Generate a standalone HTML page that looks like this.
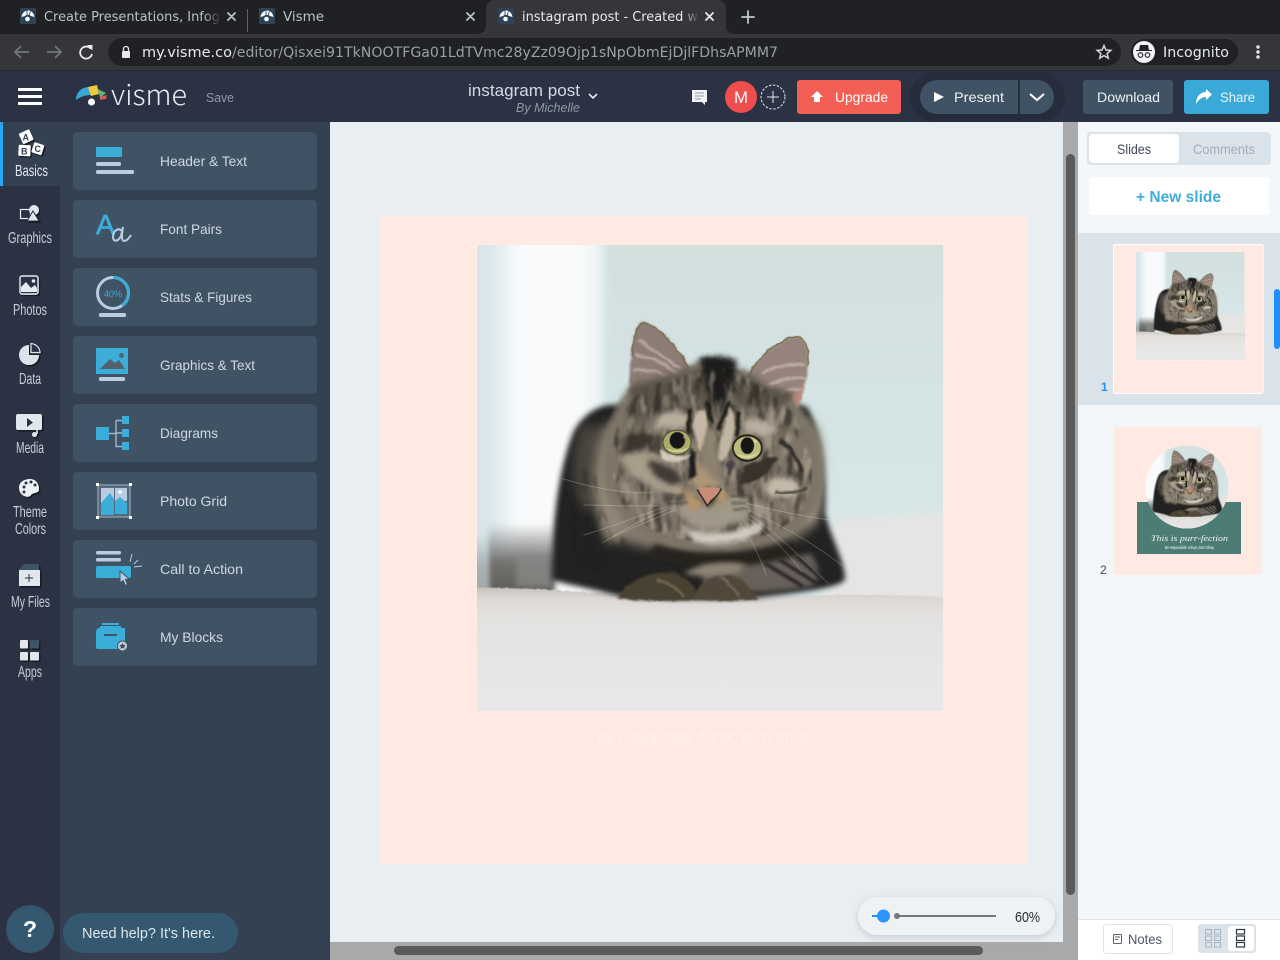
<!DOCTYPE html>
<html><head><meta charset="utf-8"><title>instagram post - Created with Visme</title>
<style>html,body{margin:0;padding:0;background:#2b3244;overflow:hidden}svg{display:block}text{font-family:"Liberation Sans",sans-serif}.d{font-family:"DejaVu Sans",sans-serif}</style></head>
<body>
<svg xmlns="http://www.w3.org/2000/svg" width="1280" height="960" viewBox="0 0 1280 960">
<defs>
<filter id="b1" x="-20%" y="-20%" width="140%" height="140%"><feGaussianBlur stdDeviation="1"/></filter>
<filter id="b3" x="-20%" y="-20%" width="140%" height="140%"><feGaussianBlur stdDeviation="3"/></filter>
<filter id="b8" x="-20%" y="-20%" width="140%" height="140%"><feGaussianBlur stdDeviation="8"/></filter>
<filter id="b16" x="-30%" y="-30%" width="160%" height="160%"><feGaussianBlur stdDeviation="16"/></filter>
<filter id="ds" x="-20%" y="-20%" width="150%" height="150%"><feDropShadow dx="1.500" dy="1.500" stdDeviation="0" flood-color="#161a24"/></filter>
<filter id="sh" x="-10%" y="-30%" width="120%" height="170%"><feDropShadow dx="0" dy="2" stdDeviation="4" flood-color="#7b8794" flood-opacity=".35"/></filter>
<filter id="fur" filterUnits="userSpaceOnUse" x="21" y="15" width="1398" height="1398" color-interpolation-filters="sRGB"><feTurbulence type="fractalNoise" baseFrequency=".035" numOctaves="2" seed="2" result="n"/><feDisplacementMap in="SourceGraphic" in2="n" scale="10" xChannelSelector="R" yChannelSelector="G"/></filter>
<filter id="grit" filterUnits="userSpaceOnUse" x="0" y="900" width="1450" height="520" color-interpolation-filters="sRGB"><feTurbulence type="fractalNoise" baseFrequency=".06 .09" numOctaves="2" seed="5" result="n"/><feDisplacementMap in="SourceGraphic" in2="n" scale="8" xChannelSelector="R" yChannelSelector="G"/><feGaussianBlur stdDeviation="1.500"/></filter>
<filter id="st1" x="0" y="0" width="1" height="1" color-interpolation-filters="sRGB"><feTurbulence type="fractalNoise" baseFrequency=".04 .012" numOctaves="3" seed="4"/><feColorMatrix values="0 0 0 0 .13 0 0 0 0 .12 0 0 0 0 .10 5 0 0 0 -2.300"/><feComposite in2="SourceAlpha" operator="in"/><feGaussianBlur stdDeviation="3"/></filter>
<filter id="st2" x="0" y="0" width="1" height="1" color-interpolation-filters="sRGB"><feTurbulence type="fractalNoise" baseFrequency=".045 .014" numOctaves="3" seed="11"/><feColorMatrix values="0 0 0 0 .78 0 0 0 0 .73 0 0 0 0 .65 5 0 0 0 -2.500"/><feComposite in2="SourceAlpha" operator="in"/><feGaussianBlur stdDeviation="3"/></filter>
<linearGradient id="cur" x1="0" x2="1" y1="0" y2="0"><stop offset="0" stop-color="#d2e3e8"/><stop offset=".2" stop-color="#dbe8ec"/><stop offset=".33" stop-color="#f1f5f7"/><stop offset=".75" stop-color="#f7f9fa"/><stop offset=".93" stop-color="#eff4f5"/><stop offset="1" stop-color="#d8e6e6"/></linearGradient>
<linearGradient id="wall" x1="0" x2="0" y1="0" y2="1"><stop offset="0" stop-color="#d2e0de"/><stop offset=".5" stop-color="#d5e6e6"/><stop offset="1" stop-color="#dbe9ea"/></linearGradient>
<linearGradient id="car" x1="0" x2="0" y1="0" y2="1"><stop offset="0" stop-color="#c6c1bb"/><stop offset=".09" stop-color="#dcd9d5"/><stop offset=".25" stop-color="#e5e3e1"/><stop offset="1" stop-color="#e9e8e9"/></linearGradient>
<linearGradient id="dk" x1="0" x2="0" y1="0" y2="1"><stop offset="0" stop-color="#5f5d5a" stop-opacity="0"/><stop offset=".55" stop-color="#5f5d5a" stop-opacity=".85"/><stop offset="1" stop-color="#5f5d5a"/></linearGradient>
<linearGradient id="fadeD" x1="0" x2="1" y1="0" y2="0"><stop offset="0" stop-color="#202124" stop-opacity="0"/><stop offset="1" stop-color="#202124"/></linearGradient>
<linearGradient id="fadeA" x1="0" x2="1" y1="0" y2="0"><stop offset="0" stop-color="#35363a" stop-opacity="0"/><stop offset="1" stop-color="#35363a"/></linearGradient>
<clipPath id="circ"><circle cx="1187" cy="487" r="41.500"/></clipPath>
<symbol id="fav" viewBox="0 0 16 16"><rect width="16" height="16" rx="1.500" fill="#2f4358"/><path d="M1.500 9C2 5 5 2.500 8 2.500S14 5 14.500 9L11 8C10 6.500 6 6.500 5 8Z" fill="#fff"/><path d="M7 2.500v5M10.500 3.500L9 7.500" stroke="#2f4358" stroke-width=".9"/><circle cx="7.500" cy="11" r="2.300" fill="#fff"/></symbol>
<symbol id="cat" viewBox="21 15 1398 1398">
<rect x="21" y="15" width="1398" height="1398" fill="url(#wall)"/>
<rect x="-20" y="-20" width="430" height="1090" fill="url(#cur)" filter="url(#b8)"/>
<rect x="135" y="-20" width="215" height="920" fill="#f8fafb" filter="url(#b16)"/>
<rect x="55" y="850" width="200" height="210" fill="url(#dk)" filter="url(#b8)"/>
<rect x="-10" y="880" width="65" height="180" fill="url(#dk)" opacity=".45" filter="url(#b8)"/>
<rect x="140" y="950" width="105" height="90" fill="#8a8b89" opacity=".7" filter="url(#b8)"/>
<path d="M1090 838L1450 820V1100H1060Z" fill="#e7e5e3" filter="url(#b16)"/>
<path d="M0 1042C300 1045 450 1070 700 1075C900 1075 1100 1055 1450 1072V1420H0Z" fill="url(#car)" filter="url(#grit)"/>

<!-- soft out-of-focus body -->
<path d="M245 1020C245 870 262 690 312 575C350 505 410 482 470 500L800 450L1010 500C1050 560 1070 720 1065 820C1085 900 1125 960 1125 1020C1100 1045 1000 1055 870 1072C700 1080 570 1078 440 1066C360 1045 300 1035 245 1020Z" fill="#232120" filter="url(#b8)"/>
<ellipse cx="355" cy="680" rx="45" ry="130" fill="#4a443e" filter="url(#b16)"/>
<path d="M395 560C365 650 370 800 420 880C530 960 860 960 1005 880C1060 800 1070 650 1040 560L800 420Z" fill="#857c6e" filter="url(#b16)"/>
<ellipse cx="430" cy="760" rx="50" ry="150" fill="#8f8676" filter="url(#b16)"/>
<ellipse cx="1020" cy="720" rx="35" ry="140" fill="#a39a8a" filter="url(#b16)"/>
<path d="M560 910C650 950 830 955 965 905L1000 955C850 995 650 980 530 945Z" fill="#26241f" filter="url(#b8)"/>
<path d="M700 975C770 990 900 970 1020 940C1055 980 1050 1030 1020 1040C900 1060 800 1060 700 1050Z" fill="#67615a" filter="url(#b8)"/>
<path d="M640 1000C700 965 780 960 830 975L800 1000L700 1010Z" fill="#8f8474" filter="url(#b8)"/>
<path d="M885 970L1000 1040M930 960L1040 1030M980 950L1060 1020" stroke="#2f2c29" stroke-width="12" fill="none" filter="url(#b3)"/>

<g filter="url(#fur)">
<path d="M440 1075C480 1012 560 988 620 1000C660 1020 680 1040 680 1080C600 1084 510 1084 440 1075Z" fill="#4a4233" filter="url(#b3)"/>
<path d="M670 1078C680 1028 740 998 790 1008C830 1028 850 1050 865 1078C800 1084 730 1084 670 1078Z" fill="#51473a" filter="url(#b3)"/>
<path d="M560 1020C600 1030 630 1050 640 1070M750 1010C780 1030 800 1050 805 1070" stroke="#8a7c64" stroke-width="5" fill="none" filter="url(#b3)"/>
<!-- ears -->
<path d="M478 450C478 360 485 270 515 245C570 255 640 330 665 405C640 460 520 480 478 450Z" fill="#8d7b74" filter="url(#b3)"/>
<path d="M488 350C490 290 500 255 520 248C570 260 635 330 660 400" fill="none" stroke="#7b6c53" stroke-width="5"/>
<path d="M505 300C540 325 590 355 635 390M495 345C550 352 600 380 635 410M490 392C540 385 590 400 620 430" stroke="#d9ccc3" stroke-width="6" fill="none" filter="url(#b3)" opacity=".8"/>
<path d="M825 420C860 350 930 295 985 290C1015 300 1020 350 1010 400C1000 460 990 490 980 515C930 490 860 470 825 420Z" fill="#96847c" filter="url(#b3)"/>
<path d="M830 418C860 350 930 295 985 290C1012 300 1018 340 1014 380" fill="none" stroke="#7d6f55" stroke-width="5"/>
<path d="M875 400C910 380 960 370 1005 375M895 435C930 420 970 410 1005 415M925 465C950 450 975 445 1000 450" stroke="#ddd1c8" stroke-width="6" fill="none" filter="url(#b3)" opacity=".8"/>
<path d="M985 510L1005 430L965 470Z" fill="#c78f7e" filter="url(#b3)" opacity=".7"/>
<!-- head -->
<path d="M478 440C530 410 620 410 680 365C750 350 820 390 870 425C930 480 990 490 1000 515C1050 580 1065 680 1050 770C1020 880 880 930 730 925C590 930 460 880 410 760C385 640 410 530 478 440Z" fill="#7e7567" filter="url(#b8)"/>
<ellipse cx="560" cy="455" rx="85" ry="28" fill="#5b5448" filter="url(#b8)"/>
<ellipse cx="900" cy="470" rx="70" ry="25" fill="#5e574b" filter="url(#b8)"/>
<path d="M500 440C590 410 690 380 760 380C830 390 900 445 960 510L820 500L700 490L560 520L470 570Z" fill="#5a5349" filter="url(#b16)"/>
<path d="M690 355C720 345 770 345 800 365C790 430 770 480 745 530C720 480 700 420 690 355Z" fill="#1b1a1a" filter="url(#b8)"/>
</g>
<!-- fur mottling, inset so the soft edge survives -->
<path d="M430 620C440 530 480 460 560 430C640 410 700 385 760 385C830 400 900 450 970 520C1020 590 1035 680 1020 760C990 860 870 910 730 905C600 905 480 860 440 760C425 710 425 660 430 620Z" filter="url(#st1)" opacity=".6"/>
<path d="M430 620C440 530 480 460 560 430C640 410 700 385 760 385C830 400 900 450 970 520C1020 590 1035 680 1020 760C990 860 870 910 730 905C600 905 480 860 440 760C425 710 425 660 430 620Z" filter="url(#st2)" opacity=".45"/>
<path d="M380 650C370 740 400 860 470 900L380 1000L300 960L310 720Z" filter="url(#st1)" opacity=".35"/>
<g filter="url(#fur)">
<!-- face patches -->
<path d="M560 530C600 510 640 510 665 530L650 570C610 560 580 560 550 570Z" fill="#b9ae9e" filter="url(#b8)"/>
<path d="M820 540C860 530 900 540 925 575L875 590L820 570Z" fill="#baafa0" filter="url(#b8)"/>
<path d="M670 560C670 520 690 500 705 510C720 540 710 600 690 640Z" fill="#c6b8a5" filter="url(#b3)"/>
<path d="M780 500C800 530 800 590 770 650C750 680 735 660 745 620Z" fill="#c3b5a3" filter="url(#b3)"/>
<path d="M660 510L655 575M712 490L725 545M775 490L745 565M805 520L803 585" stroke="#1e1b19" stroke-width="12" stroke-linecap="round" filter="url(#b3)"/>
<path d="M715 560C700 620 690 680 680 730L755 735C750 680 740 620 730 570Z" fill="#8d8270" filter="url(#b8)"/>
<path d="M680 650C700 700 740 720 755 735L680 745C650 720 660 680 680 650Z" fill="#ad9578" filter="url(#b8)"/>
<path d="M470 590C510 570 540 580 570 590C540 620 500 640 450 650Z" fill="#3a342e" filter="url(#b8)"/>
<path d="M450 650C520 620 570 640 610 680C640 720 640 740 640 770C560 760 480 720 450 650Z" fill="#a99d8b" filter="url(#b8)"/>
<path d="M530 660C580 665 630 685 640 730C600 745 550 720 530 660Z" fill="#3f3a34" filter="url(#b8)"/>
<path d="M820 680C860 660 900 650 925 650C900 700 850 740 810 730Z" fill="#37322c" filter="url(#b3)"/>
<path d="M900 720C950 700 1000 720 990 760C950 780 900 770 880 750Z" fill="#c4baa9" filter="url(#b8)"/>
<path d="M930 600C960 620 985 660 995 695" stroke="#2f2b27" stroke-width="12" fill="none" filter="url(#b3)"/>
<path d="M915 755C950 765 985 755 1010 745" stroke="#3e3932" stroke-width="8" fill="none" filter="url(#b3)"/>
<path d="M660 620L655 720L680 705L675 640Z" fill="#1f1c1a" filter="url(#b3)"/>
<path d="M770 670C780 650 800 660 795 680L775 710Z" fill="#473f47" filter="url(#b3)"/>
<path d="M570 625C600 650 640 655 665 640C650 665 610 675 575 655Z" fill="#d5cbba" filter="url(#b3)"/>
<!-- muzzle -->
<path d="M640 780C600 800 630 850 710 870C800 860 870 830 830 775C790 760 740 790 710 800Z" fill="#a09888" filter="url(#b8)"/>
<path d="M640 860C690 885 740 885 800 870C840 860 870 850 880 835C890 880 820 915 730 912C680 912 650 895 640 860Z" fill="#d2cdc4" filter="url(#b8)"/>
<path d="M640 740C660 760 680 770 700 800L660 810C650 790 640 770 640 740ZM760 745C790 770 760 790 730 800Z" fill="#b79569" filter="url(#b8)"/>
<path d="M590 765H640M590 775H635M600 790H650M785 768H835M785 790H830M790 808H830" stroke="#23201d" stroke-width="5" stroke-dasharray="6 3" filter="url(#b3)" opacity=".9"/>
</g>
<!-- eyes -->
<g filter="url(#b1)">
<ellipse cx="621" cy="607" rx="44" ry="38" fill="#4a4234"/>
<ellipse cx="621" cy="607" rx="41" ry="35" fill="#a9ab66"/>
<path d="M585 622C600 642 645 642 660 618C645 632 600 634 585 622Z" fill="#cfcf98"/>
<ellipse cx="622" cy="601" rx="23" ry="25" fill="#171614"/>
<ellipse cx="642" cy="592" rx="3" ry="2.500" fill="#a9ad9c"/>
<ellipse cx="832" cy="624" rx="46" ry="41" fill="#211d19"/>
<ellipse cx="832" cy="624" rx="41" ry="35" fill="#bcbc7c"/>
<path d="M795 640C815 660 855 658 872 632C855 650 815 652 795 640Z" fill="#dcdca8"/>
<ellipse cx="832" cy="617" rx="20" ry="25" fill="#141312"/>
<ellipse cx="856" cy="604" rx="5" ry="3.500" fill="#d6d9cc"/>
<!-- nose -->
<path d="M682 745C700 741 735 741 750 745C746 762 735 772 722 780L712 798L702 780C690 770 686 758 682 745Z" fill="#c98c78"/>
<path d="M682 748C690 765 700 775 712 798C722 780 745 770 754 745" fill="none" stroke="#26211e" stroke-width="4"/>
</g>
<!-- whiskers -->
<g fill="none" stroke="#e5dfd5" stroke-width="1.500" opacity=".6" filter="url(#b1)">
<path d="M600 798C520 820 430 860 340 885M605 803C530 830 460 870 395 910M612 810C550 840 490 860 420 895"/>
<path d="M560 797C480 800 410 795 340 795M540 758C460 760 370 745 275 715"/>
<path d="M835 810C920 850 1020 900 1120 980M840 825C910 870 990 950 1075 1030M835 835C890 880 950 930 995 995M810 850C840 890 870 950 890 1010M830 790C930 815 1050 840 1200 855"/>
</g>
</symbol>
</defs>

<rect width="1280" height="960" fill="#2b3244"/>

<!-- tab strip -->
<rect width="1280" height="34" fill="#202124"/>
<rect y="34" width="1280" height="37" fill="#35363a"/>
<rect y="70" width="1280" height="1" fill="#2a2b2f"/>
<path d="M476 34C483 34 486 31 486 26V10C486 4 489 0 495 0H717C723 0 726 4 726 10V26C726 31 729 34 736 34Z" fill="#35363a"/>
<rect x="247" y="9" width="1" height="23" fill="#5f6368"/>
<use href="#fav" x="20" y="8" width="16" height="16"/>
<use href="#fav" x="259" y="8" width="16" height="16"/>
<use href="#fav" x="498" y="8" width="16" height="16"/>
<text class="d" x="44" y="21" font-size="13" fill="#bdc1c6" textLength="176" lengthAdjust="spacingAndGlyphs">Create Presentations, Infog</text>
<rect x="204" y="6" width="17" height="22" fill="url(#fadeD)"/>
<text class="d" x="283" y="21" font-size="13" fill="#bdc1c6" textLength="41" lengthAdjust="spacingAndGlyphs">Visme</text>
<text class="d" x="522" y="21" font-size="13" fill="#e8eaed" textLength="176" lengthAdjust="spacingAndGlyphs">instagram post - Created w</text>
<rect x="682" y="6" width="17" height="22" fill="url(#fadeA)"/>
<g stroke-width="1.800" stroke-linecap="round">
<path d="M228 13l7 7M235 13l-7 7M467 13l7 7M474 13l-7 7" stroke="#bdc1c6"/>
<path d="M706 13l7 7M713 13l-7 7" stroke="#e8eaed"/>
<path d="M748 11v12M742 17h12" stroke="#c4c7cc"/>
</g>

<!-- toolbar -->
<g fill="none" stroke-width="1.800">
<path d="M29 52H15M21 46l-6 6 6 6" stroke="#73767b"/>
<path d="M47 52H61M55 46l6 6-6 6" stroke="#73767b"/>
<path d="M91 49A6 6 0 1 0 92 54" stroke="#e8eaed"/>
</g>
<path d="M87 45l5.500 0 0 5.500Z" fill="#e8eaed"/>
<rect x="108" y="38" width="1013" height="28" rx="14" fill="#202124"/>
<rect x="122" y="51" width="8" height="7" rx="1" fill="#e8eaed"/>
<path d="M123.500 51v-2a2.500 2.500 0 0 1 5 0v2" fill="none" stroke="#e8eaed" stroke-width="1.300"/>
<text class="d" x="142" y="57" font-size="14" fill="#e8eaed" textLength="90" lengthAdjust="spacingAndGlyphs">my.visme.co</text>
<text class="d" x="232" y="57" font-size="14" fill="#9aa0a6" textLength="546" lengthAdjust="spacingAndGlyphs">/editor/Qisxei91TkNOOTFGa01LdTVmc28yZz09Ojp1sNpObmEjDjlFDhsAPMM7</text>
<path d="M1104 45.500l2 4.500 4.800.4-3.700 3.100 1.200 4.700-4.300-2.600-4.300 2.600 1.200-4.700-3.700-3.100 4.800-.4Z" fill="none" stroke="#d5d7da" stroke-width="1.500"/>
<rect x="1131" y="39" width="107" height="26" rx="13" fill="#202124"/>
<circle cx="1144" cy="52" r="11" fill="#f1f3f4"/>
<path d="M1136 50h16v1h-16ZM1139 50l1-5h8l1 5Z" fill="#202124"/>
<circle cx="1140.500" cy="55" r="2.300" fill="none" stroke="#202124" stroke-width="1.100"/><circle cx="1147.500" cy="55" r="2.300" fill="none" stroke="#202124" stroke-width="1.100"/>
<text class="d" x="1163" y="57" font-size="14.500" fill="#e8eaed" textLength="66" lengthAdjust="spacingAndGlyphs">Incognito</text>
<g fill="#e8eaed"><circle cx="1258" cy="47" r="1.700"/><circle cx="1258" cy="52" r="1.700"/><circle cx="1258" cy="57" r="1.700"/></g>

<!-- header -->
<rect y="71" width="1280" height="51" fill="#2b3244"/>
<rect x="18" y="88" width="24" height="3" fill="#fff"/><rect x="18" y="95" width="24" height="3" fill="#fff"/><rect x="18" y="102" width="24" height="3" fill="#fff"/>
<path d="M76 100C76 93 81 87 89 87L91 95C85 95 80 97 76 100Z" fill="#3aa9d8"/>
<path d="M88 87L97 85L99 94L91 96Z" fill="#f1c93b"/>
<path d="M98 89L106 93L100 98Z" fill="#5fb37c"/>
<path d="M100 97L107 95L106 99L100 100Z" fill="#e0584d"/>
<circle cx="91.500" cy="102" r="3.500" fill="#fff"/>
<text x="111" y="105" font-size="28" fill="#e8ebef" textLength="76" lengthAdjust="spacingAndGlyphs" style="font-family:'Noto Sans CJK JP','Liberation Sans',sans-serif;font-weight:300">visme</text>
<text x="206" y="102" font-size="13" fill="#8f99a6" textLength="28" lengthAdjust="spacingAndGlyphs">Save</text>
<text x="468" y="96" font-size="17" fill="#d5dae0" textLength="112" lengthAdjust="spacingAndGlyphs">instagram post</text>
<text x="516" y="112" font-size="13" font-style="italic" fill="#8f99a6" textLength="64" lengthAdjust="spacingAndGlyphs">By Michelle</text>
<path d="M589 94l4 4 4-4" fill="none" stroke="#e6e9ed" stroke-width="1.600"/>
<path d="M692 90h15v12h-2v3l-3-3h-10Z" fill="#f1f3f5"/><path d="M695 93h9M695 96h9M695 99h6" stroke="#8e97a3" stroke-width="1"/>
<circle cx="741" cy="97" r="16" fill="#f04d4d"/>
<text x="734" y="103" font-size="17" fill="#fff" textLength="14" lengthAdjust="spacingAndGlyphs">M</text>
<circle cx="773" cy="97" r="12" fill="none" stroke="#e6e9ed" stroke-width="1" stroke-dasharray="2.500 1.500"/>
<path d="M773 91v12M767 97h12" stroke="#e6e9ed" stroke-width="1"/>
<rect x="797" y="80" width="104" height="34" rx="3" fill="#f45f55"/>
<path d="M817 91l6 6h-3v5h-6v-5h-3Z" fill="#fff"/>
<text x="835" y="102" font-size="14" fill="#fff" textLength="53" lengthAdjust="spacingAndGlyphs">Upgrade</text>
<path d="M935 72H1040A25 25 0 0 1 1040 122H935A25 25 0 0 1 935 72Z" fill="#262c3c"/>
<path d="M937 80H1018V114H937A17 17 0 0 1 937 80Z" fill="#405364"/>
<path d="M1020 80H1037A17 17 0 0 1 1037 114H1020Z" fill="#405364"/>
<path d="M934 92l10 5-10 5Z" fill="#fff"/>
<text x="954" y="102" font-size="14" fill="#eef1f4" textLength="50" lengthAdjust="spacingAndGlyphs">Present</text>
<path d="M1030 94l7 6 7-6" fill="none" stroke="#fff" stroke-width="2"/>
<rect x="1083" y="80" width="90" height="34" rx="3" fill="#405364"/>
<text x="1097" y="102" font-size="14" fill="#eef1f4" textLength="63" lengthAdjust="spacingAndGlyphs">Download</text>
<rect x="1184" y="80" width="85" height="34" rx="3" fill="#39a9d8"/>
<path d="M1196 104C1196 96 1201 92 1206 92V89L1212 94.500L1206 100V97C1202 97 1199 99 1196 104Z" fill="#fff"/>
<text x="1220" y="102" font-size="14" fill="#eef3f6" textLength="35" lengthAdjust="spacingAndGlyphs">Share</text>

<!-- rail and panel -->
<rect y="122" width="60" height="838" fill="#2b3244"/>
<rect x="60" y="122" width="270" height="838" fill="#334152"/>
<rect y="122" width="60" height="64" fill="#334152"/>
<rect y="122" width="3" height="64" fill="#2aa6f0"/>
<g font-size="16" fill="#c9cfd7">
<text x="15" y="176" textLength="33" lengthAdjust="spacingAndGlyphs" fill="#e3e7ec">Basics</text>
<text x="8" y="243" textLength="44" lengthAdjust="spacingAndGlyphs">Graphics</text>
<text x="13" y="315" textLength="34" lengthAdjust="spacingAndGlyphs">Photos</text>
<text x="19" y="384" textLength="22" lengthAdjust="spacingAndGlyphs">Data</text>
<text x="16" y="453" textLength="28" lengthAdjust="spacingAndGlyphs">Media</text>
<text x="13" y="517" textLength="34" lengthAdjust="spacingAndGlyphs">Theme</text>
<text x="15" y="534" textLength="31" lengthAdjust="spacingAndGlyphs">Colors</text>
<text x="11" y="607" textLength="39" lengthAdjust="spacingAndGlyphs">My Files</text>
<text x="18" y="677" textLength="24" lengthAdjust="spacingAndGlyphs">Apps</text>
</g>
<g>
<g filter="url(#ds)">
<rect x="20.500" y="131" width="11.500" height="11.500" rx="1" fill="#fff" transform="rotate(-25 26 137)"/>
<rect x="18.500" y="145" width="12" height="11" rx="1" fill="#fff" transform="rotate(3 24 150)"/>
<rect x="32.500" y="143.500" width="10.500" height="10.500" rx="1" fill="#fff" transform="rotate(18 38 149)"/>
</g>
<text x="22.500" y="140.500" font-size="9" font-weight="700" fill="#334152">A</text>
<text x="21" y="154.500" font-size="9" font-weight="700" fill="#334152">B</text>
<text x="34.500" y="152" font-size="9" font-weight="700" fill="#334152">C</text>
<g filter="url(#ds)">
<rect x="20.500" y="209.500" width="10" height="9" fill="#2b3244" stroke="#e6ebf1" stroke-width="1.200"/>
<circle cx="34" cy="210" r="5" fill="#e1e6ee"/>
<path d="M33 211l6 10H27Z" fill="#e1e6ee" stroke="#2b3244"/>
<rect x="20" y="276" width="18" height="18" rx="2" fill="#2b3244" stroke="#e6ebf1" stroke-width="1.400"/>
<circle cx="33.500" cy="281" r="1.800" fill="#e6ebf1"/>
<path d="M21 292V287L26 282L31 288L35 285L37 288V292Z" fill="#e6ebf1"/>
<path d="M29 345V355H39A10 10 0 1 1 29 345Z" fill="#dde3ea"/>
<path d="M31 343.500C36 344 40 348 40 352.500H31Z" fill="#2b3244" stroke="#dde3ea" stroke-width="1.200"/>
<rect x="16" y="414" width="26" height="16" rx="2" fill="#e2e7ee"/>
<path d="M37 423V434" stroke="#e2e7ee" stroke-width="1.500"/>
<circle cx="34.500" cy="434.500" r="2.500" fill="#e2e7ee"/>
<path d="M19 488C19 482 24 479 30 479C36 479 39 484 39 489C39 494 33 492 31 495C29 499 19 496 19 488Z" fill="#eef1f4"/>
<path d="M24 564L39 564V570H19Z" fill="#3e5566"/>
<path d="M19 570H40V586H19Z" fill="#e2e7ee"/>
<rect x="20" y="640" width="8" height="8.500" rx="1" fill="#e2e7ee"/>
<rect x="30" y="640" width="9" height="8.500" rx="1" fill="#3e5566"/>
<rect x="20" y="652" width="8" height="8.500" rx="1" fill="#e2e7ee"/>
<rect x="30" y="652" width="9" height="8.500" rx="1" fill="#e2e7ee"/>
</g>
<path d="M27 418l6 4.500-6 4.500Z" fill="#2b3244"/>
<g fill="#2b3244"><circle cx="24" cy="487" r="1.500"/><circle cx="26" cy="483" r="1.500"/><circle cx="31" cy="482" r="1.500"/><circle cx="35" cy="485" r="1.500"/><circle cx="24" cy="492" r="1.500"/></g>
<path d="M29 574v8M25 578h8" stroke="#2b3244" stroke-width="1"/>
</g>

<!-- cards -->
<g fill="#405364">
<rect x="73" y="132" width="244" height="58" rx="5"/><rect x="73" y="200" width="244" height="58" rx="5"/>
<rect x="73" y="268" width="244" height="58" rx="5"/><rect x="73" y="336" width="244" height="58" rx="5"/>
<rect x="73" y="404" width="244" height="58" rx="5"/><rect x="73" y="472" width="244" height="58" rx="5"/>
<rect x="73" y="540" width="244" height="58" rx="5"/><rect x="73" y="608" width="244" height="58" rx="5"/>
</g>
<g font-size="14" fill="#cfd8e0">
<text x="160" y="166" textLength="87" lengthAdjust="spacingAndGlyphs">Header &amp; Text</text>
<text x="160" y="234" textLength="62" lengthAdjust="spacingAndGlyphs">Font Pairs</text>
<text x="160" y="302" textLength="92" lengthAdjust="spacingAndGlyphs">Stats &amp; Figures</text>
<text x="160" y="370" textLength="95" lengthAdjust="spacingAndGlyphs">Graphics &amp; Text</text>
<text x="160" y="438" textLength="58" lengthAdjust="spacingAndGlyphs">Diagrams</text>
<text x="160" y="506" textLength="67" lengthAdjust="spacingAndGlyphs">Photo Grid</text>
<text x="160" y="574" textLength="83" lengthAdjust="spacingAndGlyphs">Call to Action</text>
<text x="160" y="642" textLength="63" lengthAdjust="spacingAndGlyphs">My Blocks</text>
</g>
<!-- card icons -->
<rect x="96" y="147" width="26" height="10" rx="1" fill="#3aadd9"/>
<rect x="96" y="162" width="25" height="4" rx="1.500" fill="#b9cce2"/><rect x="96" y="170" width="38" height="4" rx="1.500" fill="#b9cce2"/>
<text x="96" y="234" font-size="28" fill="#3aadd9" stroke="#3aadd9" stroke-width=".7">A</text>
<path d="M122 231C118 227 113 231 113 237C113 242 118 242 121 236L123 227C122 233 121 241 124 241C127 241 129 238 131 235" fill="none" stroke="#b9cce2" stroke-width="2"/>
<circle cx="113" cy="293" r="15.500" fill="none" stroke="#b9cce2" stroke-width="3"/>
<path d="M113 277.500A15.500 15.500 0 0 1 122 305.600" fill="none" stroke="#3aadd9" stroke-width="3"/>
<text x="113" y="297" font-size="9" fill="#3aadd9" text-anchor="middle" textLength="18" lengthAdjust="spacingAndGlyphs">40%</text>
<rect x="99" y="313" width="27" height="4" rx="1.500" fill="#b9cce2"/>
<rect x="96" y="348" width="32" height="26" fill="#3aadd9"/>
<path d="M100 369L110 359L115 363L119 360L125 369Z" fill="#55606c"/><circle cx="121.500" cy="355.500" r="2.500" fill="#55606c"/>
<rect x="99" y="377" width="26" height="4" rx="1.500" fill="#b9cce2"/>
<path d="M109 433.500H116M116 420.500H122M116 420.500V446.500H122M116 433H122" fill="none" stroke="#9fb5cd" stroke-width="1.400"/>
<rect x="96" y="427" width="13" height="13" fill="#3aadd9"/>
<rect x="122" y="416" width="7" height="8" fill="#3aadd9"/><rect x="122" y="429" width="7" height="8" fill="#3aadd9"/><rect x="122" y="442" width="7" height="8" fill="#3aadd9"/>
<rect x="98" y="485" width="32" height="32" fill="#56697a" stroke="#8597a8" stroke-width="1.500"/>
<rect x="101" y="488" width="13" height="27" fill="#b9cce2"/>
<path d="M101 515V503L110 493L114 499V515Z" fill="#3aadd9"/>
<rect x="115" y="488" width="12" height="13" fill="#b9cce2"/><circle cx="120" cy="492" r="1.800" fill="#fff"/>
<path d="M115 501L120 497L127 503V514H115Z" fill="#3aadd9"/>
<g fill="#fff"><rect x="96" y="483" width="3" height="3"/><rect x="129" y="483" width="3" height="3"/><rect x="96" y="516" width="3" height="3"/><rect x="129" y="516" width="3" height="3"/></g>
<rect x="96" y="551" width="25" height="3.500" rx="1.500" fill="#b9cce2"/><rect x="96" y="558" width="25" height="3.500" rx="1.500" fill="#b9cce2"/>
<rect x="96" y="566" width="35" height="12" rx="1.500" fill="#3aadd9"/>
<path d="M120 571L120 583L123 580.500L125.500 585.500L127.500 584.500L125.500 579.500L129 579Z" fill="#b9cce2" stroke="#405364"/>
<path d="M130 562L132 554M134 564L138 560M134 567L142 566" stroke="#b9cce2" stroke-width="1"/>
<rect x="102" y="623" width="17" height="2" fill="#3aadd9"/><rect x="100" y="626" width="21" height="2.500" fill="#3aadd9"/>
<path d="M96 631V646A2 2 0 0 0 98 649H122A2 2 0 0 0 125 646V628H98Z" fill="#3aadd9"/>
<rect x="104" y="634" width="13" height="2" fill="#405364"/>
<circle cx="122.500" cy="646" r="5" fill="#c8d3df" stroke="#405364"/>
<path d="M122.500 642.800l1 2.100 2.300.3-1.700 1.500.5 2.300-2.100-1.200-2.100 1.200.5-2.300-1.700-1.500 2.300-.3Z" fill="#3a4a5a"/>

<!-- help -->
<circle cx="30" cy="929" r="24" fill="#3b5167"/>
<circle cx="30" cy="929" r="22.500" fill="#33586f"/>
<text x="30" y="937" font-size="23" font-weight="700" fill="#fff" text-anchor="middle">?</text>
<rect x="63" y="913" width="175" height="40" rx="20" fill="#33586f"/>
<text x="82" y="938" font-size="14.500" fill="#dfe6ea" textLength="133" lengthAdjust="spacingAndGlyphs">Need help? It's here.</text>

<!-- canvas -->
<rect x="330" y="122" width="733" height="820" fill="#e9eef2"/>
<rect x="330" y="942" width="748" height="18" fill="#a9a9a9"/>
<rect x="1063" y="122" width="15" height="838" fill="#a9a9a9"/>
<rect x="1066" y="154" width="9" height="741" rx="4.500" fill="#5a5a5a"/>
<rect x="394" y="946" width="589" height="9" rx="4.500" fill="#5a5a5a"/>
<rect x="380" y="216" width="648" height="648" fill="#ffeae3"/>
<use href="#cat" x="477" y="245" width="466" height="466"/>
<text x="598" y="743" font-size="16" fill="#fff1ec" textLength="210" lengthAdjust="spacingAndGlyphs">Be responsible: Adopt, don't Shop</text>

<rect x="858" y="897" width="197" height="38" rx="19" fill="#eef2f5" filter="url(#sh)"/>
<rect x="872" y="915" width="12" height="2" fill="#1e90ff"/>
<rect x="897" y="915" width="99" height="2" fill="#777"/>
<circle cx="883.500" cy="916" r="6.500" fill="#2a95fb"/>
<circle cx="897" cy="916" r="3" fill="#777"/>
<text x="1015" y="922" font-size="15" fill="#2b2b2b" textLength="25" lengthAdjust="spacingAndGlyphs">60%</text>

<!-- right panel -->
<rect x="1078" y="122" width="202" height="838" fill="#f3f7f9"/>
<rect x="1087" y="132" width="184" height="33" rx="4" fill="#dbe3ea"/>
<rect x="1089" y="134" width="90" height="29" rx="4" fill="#fff"/>
<text x="1117" y="154" font-size="14" fill="#3e4a5a" textLength="34" lengthAdjust="spacingAndGlyphs">Slides</text>
<text x="1193" y="154" font-size="14" fill="#a3adbb" textLength="62" lengthAdjust="spacingAndGlyphs">Comments</text>
<rect x="1089" y="177" width="180" height="38" rx="4" fill="#fff"/>
<text x="1136" y="202" font-size="15.500" font-weight="700" fill="#3fadda" textLength="85" lengthAdjust="spacingAndGlyphs">+ New slide</text>
<rect x="1078" y="233" width="202" height="172" fill="#dbe3ea"/>
<rect x="1113.500" y="244.500" width="149.500" height="149" rx="2" fill="#ffeae3" stroke="#fff"/>
<use href="#cat" x="1136" y="252" width="109" height="108"/>
<rect x="1166" y="365" width="48" height="1" fill="#fff1ec"/>
<text x="1101" y="391" font-size="12" font-weight="700" fill="#1e90ff">1</text>
<rect x="1274" y="289" width="6" height="60" rx="3" fill="#1e90ff"/>
<rect x="1114" y="427" width="148" height="148" rx="2" fill="#ffeae3"/>
<rect x="1137" y="502" width="104" height="52" fill="#4c7c74"/>
<g clip-path="url(#circ)"><rect x="1140" y="440" width="100" height="95" fill="#eceaea"/><use href="#cat" x="1135" y="432" width="111" height="111"/></g>
<path d="M1137 502H1146C1152 518 1168 529 1187 529C1206 529 1222 518 1228 502H1241V554H1137Z" fill="#4c7c74"/>
<text x="1151" y="541" font-size="8.500" font-style="italic" style="font-family:'Liberation Serif',serif" fill="#eef5f2" textLength="77" lengthAdjust="spacingAndGlyphs">This is purr-fection</text>
<text x="1165" y="549" font-size="4.500" font-weight="700" fill="#cfe0dc" textLength="49" lengthAdjust="spacingAndGlyphs">Be responsible: Adopt, don't Shop</text>
<text x="1100" y="574" font-size="12" fill="#3e4a5a">2</text>

<rect x="1078" y="920" width="202" height="40" fill="#fff"/>
<rect x="1078" y="919" width="202" height="1" fill="#dbe3ea"/>
<rect x="1103.500" y="924.500" width="69" height="29" rx="3" fill="#fff" stroke="#dde5ec"/>
<rect x="1113.500" y="934.500" width="8" height="9" rx="1" fill="none" stroke="#56626f"/>
<path d="M1115 937h5M1115 939.500h3" stroke="#56626f"/>
<text x="1128" y="944" font-size="14" fill="#4a5667" textLength="34" lengthAdjust="spacingAndGlyphs">Notes</text>
<rect x="1198" y="924" width="58" height="29" rx="3" fill="#dbe3ea"/>
<rect x="1228" y="926" width="26" height="25" rx="3" fill="#fff"/>
<g fill="none" stroke="#a9b4c0" stroke-width="1">
<rect x="1205.500" y="929.500" width="6" height="4.500"/><rect x="1214.500" y="929.500" width="6" height="4.500"/>
<rect x="1205.500" y="936" width="6" height="4.500"/><rect x="1214.500" y="936" width="6" height="4.500"/>
<rect x="1205.500" y="942.500" width="6" height="4.500"/><rect x="1214.500" y="942.500" width="6" height="4.500"/>
</g>
<g fill="none" stroke="#2e3744" stroke-width="1.200">
<rect x="1236.500" y="929.500" width="8" height="4.500"/><rect x="1236.500" y="936" width="8" height="4.500"/><rect x="1236.500" y="942.500" width="8" height="4.500"/>
</g>
</svg>
</body></html>
